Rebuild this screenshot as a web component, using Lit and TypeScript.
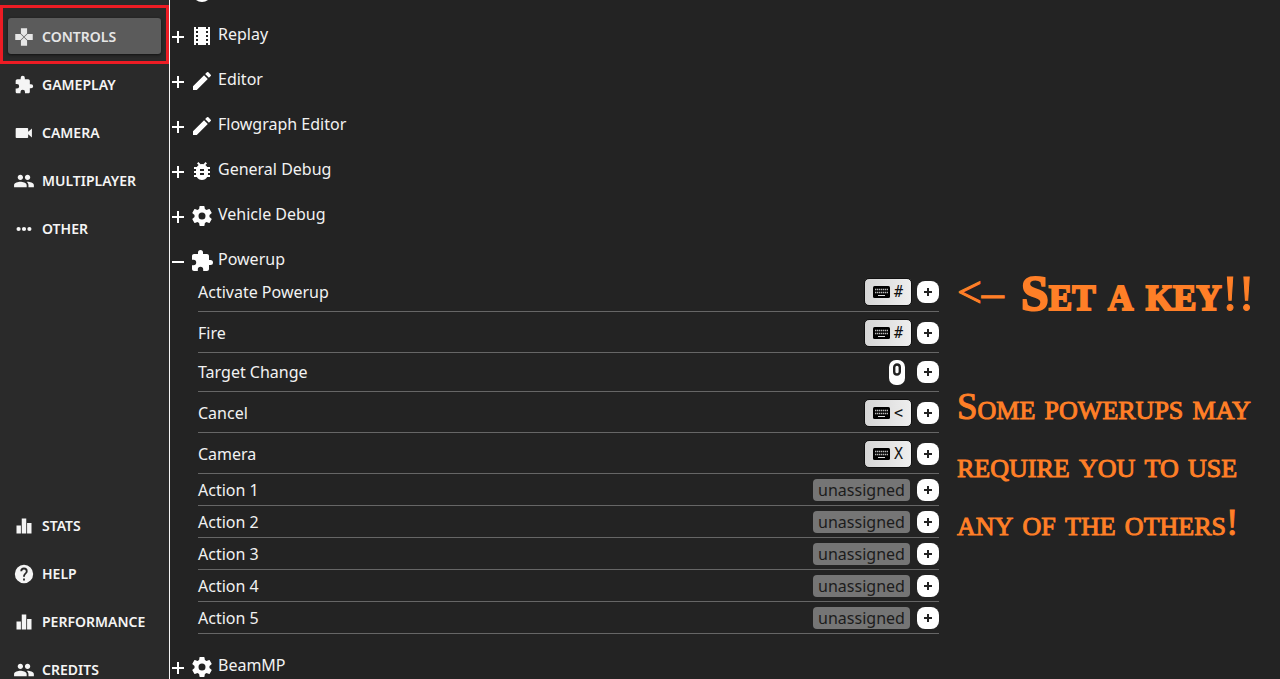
import { LitElement, html, css, svg, nothing } from "lit";
import { customElement, property } from "lit/decorators.js";

const icons: Record<string, unknown> = {
  dpad: svg`<path d="M8.300 1.500h7.400v6.300L12 11.500 8.300 7.800zM22.500 8.300v7.400h-6.300L12.500 12l3.700-3.700zM8.300 22.500h7.400v-6.300L12 12.500l-3.700 3.700zM1.500 8.300v7.400h6.300L11.500 12 7.800 8.300z"/>`,
  puzzle: svg`<path d="M20.500 11H19V7c0-1.100-.9-2-2-2h-4V3.500a2.500 2.500 0 0 0-5 0V5H4c-1.100 0-2 .9-2 2v3.800h1.500a2.700 2.700 0 0 1 0 5.400H2V20c0 1.100.9 2 2 2h3.800v-1.500a2.700 2.700 0 0 1 5.400 0V22H17c1.100 0 2-.9 2-2v-4h1.500a2.500 2.500 0 0 0 0-5z"/>`,
  video: svg`<path d="M17 10.500V7c0-.55-.45-1-1-1H3c-.55 0-1 .45-1 1v10c0 .55.45 1 1 1h13c.55 0 1-.45 1-1v-3.500l4.500 4v-11l-4.500 4z"/>`,
  people: svg`<path transform="translate(-1 -1) scale(1.080)" d="M16 11c1.660 0 2.990-1.340 2.990-3S17.660 5 16 5s-3 1.340-3 3 1.340 3 3 3zm-8 0c1.660 0 2.990-1.340 2.990-3S9.660 5 8 5 5 6.340 5 8s1.340 3 3 3zm0 2c-2.330 0-7 1.170-7 3.500V19h14v-2.500c0-2.330-4.670-3.500-7-3.500zm8 0c-.29 0-.62.02-.97.05 1.160.84 1.970 1.970 1.970 3.450V19h6v-2.500c0-2.330-4.670-3.500-7-3.500z"/>`,
  dots: svg`<circle cx="5.500" cy="12" r="2.500"/><circle cx="12" cy="12" r="2.500"/><circle cx="18.500" cy="12" r="2.500"/>`,
  bars: svg`<path d="M3 11.500h5.300V21H3zM9.300 3h5.400v18H9.300zM15.700 8.500H21V21h-5.300z"/>`,
  help: svg`<path fill-rule="evenodd" transform="translate(-1.200 -1.200) scale(1.100)" d="M12 2a10 10 0 1 0 0 20 10 10 0 0 0 0-20zm1 17h-2v-2h2zm2.070-7.750-.9.920C13.450 12.900 13 13.500 13 15h-2v-.5c0-1.100.45-2.100 1.170-2.830l1.240-1.260c.37-.36.59-.86.59-1.410a2 2 0 0 0-4 0H8a4 4 0 0 1 8 0c0 .88-.36 1.680-.93 2.250z"/>`,
  film: svg`<path d="M18 3v2h-2V3H8v2H6V3H4v18h2v-2h2v2h8v-2h2v2h2V3h-2zM8 17H6v-2h2v2zm0-4H6v-2h2v2zm0-4H6V7h2v2zm10 8h-2v-2h2v2zm0-4h-2v-2h2v2zm0-4h-2V7h2v2z"/>`,
  pencil: svg`<path d="M3 17.250V21h3.750L17.810 9.940l-3.750-3.750L3 17.250zM20.710 7.040a1 1 0 0 0 0-1.410l-2.340-2.340a1 1 0 0 0-1.410 0l-1.830 1.830 3.750 3.750 1.830-1.830z"/>`,
  bug: svg`<path d="M20 8h-2.810a5.985 5.985 0 0 0-1.820-1.960L17 4.410 15.590 3l-2.170 2.170a6.002 6.002 0 0 0-2.830 0L8.410 3 7 4.410l1.620 1.630C7.880 6.550 7.260 7.220 6.810 8H4v2h2.090c-.05.33-.09.66-.09 1v1H4v2h2v1c0 .34.04.67.09 1H4v2h2.810c1.040 1.790 2.970 3 5.190 3s4.150-1.210 5.190-3H20v-2h-2.090c.05-.33.09-.66.09-1v-1h2v-2h-2v-1c0-.34-.04-.67-.09-1H20V8zm-6 8h-4v-2h4v2zm0-4h-4v-2h4v2z"/>`,
  gear: svg`<path d="M19.430 12.980c.04-.32.07-.64.07-.98s-.03-.66-.07-.98l2.110-1.650c.19-.15.24-.42.12-.64l-2-3.460c-.12-.22-.39-.3-.61-.22l-2.490 1c-.52-.4-1.080-.73-1.690-.98l-.38-2.650A.488.488 0 0 0 14 2h-4c-.25 0-.46.18-.49.42l-.38 2.650c-.61.25-1.170.59-1.690.98l-2.490-1c-.23-.09-.49 0-.61.22l-2 3.460c-.13.22-.07.49.12.64l2.110 1.650c-.04.32-.07.65-.07.98s.03.66.07.98l-2.110 1.650c-.19.15-.24.42-.12.64l2 3.460c.12.22.39.3.61.22l2.490-1c.52.4 1.080.73 1.690.98l.38 2.650c.03.24.24.42.49.42h4c.25 0 .46-.18.49-.42l.38-2.650c.61-.25 1.170-.59 1.690-.98l2.490 1c.23.09.49 0 .61-.22l2-3.460c.12-.22.07-.49-.12-.64l-2.110-1.650zM12 15.500a3.500 3.500 0 1 1 0-7 3.500 3.500 0 0 1 0 7z"/>`,
  disc: svg`<circle cx="12" cy="13" r="10"/>`,
  plus: svg`<path d="M10 0h4v10h10v4H14v10h-4V14H0v-4h10z"/>`,
  boldPlus: svg`<path d="M9 0h6v9h9v6h-9v9H9v-9H0V9h9z"/>`,
  minus: svg`<path d="M0 10h24v4H0z"/>`,
};

const icon = (name: string) =>
  html`<svg class="icon" viewBox="0 0 24 24" aria-hidden="true">${icons[name]}</svg>`;

const keyboard = html`<svg class="keyboard" viewBox="0 0 17 12" aria-hidden="true">
  <rect width="17" height="12" rx="1.500" />
  <path d="M2 3.500h13M2 6.500h13" stroke="#bbb" stroke-width="1.400" stroke-dasharray="1.400 .6" />
  <path d="M5 9.500h7" stroke="#ddd" stroke-width="1" />
</svg>`;

interface Binding {
  label: string;
  kind: "key" | "mouse" | "none";
  value?: string;
}

interface Group {
  label: string;
  icon: string;
  open?: boolean;
  bindings?: Binding[];
}

const groups: Group[] = [
  { label: "", icon: "disc" },
  { label: "Replay", icon: "film" },
  { label: "Editor", icon: "pencil" },
  { label: "Flowgraph Editor", icon: "pencil" },
  { label: "General Debug", icon: "bug" },
  { label: "Vehicle Debug", icon: "gear" },
  {
    label: "Powerup",
    icon: "puzzle",
    open: true,
    bindings: [
      { label: "Activate Powerup", kind: "key", value: "#" },
      { label: "Fire", kind: "key", value: "#" },
      { label: "Target Change", kind: "mouse" },
      { label: "Cancel", kind: "key", value: "<" },
      { label: "Camera", kind: "key", value: "X" },
      { label: "Action 1", kind: "none" },
      { label: "Action 2", kind: "none" },
      { label: "Action 3", kind: "none" },
      { label: "Action 4", kind: "none" },
      { label: "Action 5", kind: "none" },
    ],
  },
  { label: "BeamMP", icon: "gear" },
];

@customElement("side-nav")
class SideNav extends LitElement {
  static styles = css`
    :host {
      display: flex;
      flex-direction: column;
      justify-content: space-between;
      box-sizing: border-box;
      padding: 18px 8px 0;
      background: #2a2a2a;
      border-right: 1px solid #f4f4f4;
      font: 600 14px/20px "Noto Sans", "Open Sans", sans-serif;
    }
    .group {
      display: flex;
      flex-direction: column;
      gap: 12px;
    }
    .secondary {
      margin-bottom: -8px;
    }
    .item {
      position: relative;
      display: flex;
      align-items: center;
      gap: 8px;
      box-sizing: border-box;
      height: 36px;
      padding: 2px 6px 0;
      border-radius: 3px;
      color: #f5f5f5;
      text-decoration: none;
    }
    .active {
      background: #5b5b5b;
      color: #e6e6e6;
      box-shadow: 0 1px 3px #111;
    }
    .active::after {
      content: "";
      position: absolute;
      inset: -13px -8px -10px;
      border: 3px solid #ed1c24;
    }
    .icon {
      flex: none;
      width: 20px;
      height: 20px;
      fill: currentColor;
    }
  `;

  private item(label: string, name: string, active = false) {
    return html`<a class="item ${active ? "active" : ""}" href="#${label.toLowerCase()}"
      aria-current=${active ? "page" : nothing}>${icon(name)}<span>${label}</span></a>`;
  }

  render() {
    return html`
      <nav class="group" aria-label="Options">
        ${this.item("CONTROLS", "dpad", true)} ${this.item("GAMEPLAY", "puzzle")}
        ${this.item("CAMERA", "video")} ${this.item("MULTIPLAYER", "people")}
        ${this.item("OTHER", "dots")}
      </nav>
      <nav class="group secondary" aria-label="Information">
        ${this.item("STATS", "bars")} ${this.item("HELP", "help")}
        ${this.item("PERFORMANCE", "bars")} ${this.item("CREDITS", "people")}
      </nav>
    `;
  }
}

@customElement("binding-row")
class BindingRow extends LitElement {
  @property({ attribute: false }) binding!: Binding;

  static styles = css`
    :host {
      display: block;
    }
    .row {
      display: flex;
      align-items: center;
      box-sizing: border-box;
      height: 32px;
      border-bottom: 1px solid #666;
    }
    .key-row {
      height: 41px;
      padding-top: 2px;
    }
    .mouse-row {
      height: 39px;
    }
    .label {
      flex: 1;
    }
    button {
      display: flex;
      align-items: center;
      justify-content: center;
      box-sizing: border-box;
      padding: 0;
      border: 0;
      color: #111;
    }
    .key {
      gap: 4px;
      width: 48px;
      height: 28px;
      margin-right: 5px;
      border: 1px solid #111;
      border-radius: 5px;
      background: linear-gradient(90deg, #d6d6d6, #eee);
      font: 15px/20px "DejaVu Sans Mono", monospace;
    }
    .keyboard {
      width: 17px;
      height: 12px;
    }
    .mouse {
      width: 16px;
      height: 25px;
      margin-right: 12px;
      background: none;
    }
    .mouse svg {
      width: 16px;
      height: 25px;
    }
    .none {
      width: 97px;
      height: 22px;
      margin-right: 7px;
      border-radius: 4px;
      background: #757575;
      color: #1c1c1c;
      font: 16px/20px "Noto Sans", "Open Sans", sans-serif;
    }
    .add {
      width: 22px;
      height: 22px;
      border-radius: 8px;
      background: #fff;
    }
    .icon {
      width: 8px;
      height: 8px;
      fill: #222;
    }
  `;

  private control(b: Binding) {
    if (b.kind === "key") return html`<button class="key">${keyboard}<span>${b.value}</span></button>`;
    if (b.kind === "none") return html`<button class="none">unassigned</button>`;
    return html`<button class="mouse" aria-label="Mouse wheel button">
      <svg viewBox="0 0 16 25" aria-hidden="true">
        <rect width="16" height="25" rx="7" fill="#fff" />
        <rect x="5.200" y="4.500" width="5.600" height="10" rx="2.800" fill="#fff" stroke="#222" stroke-width="2.400" />
      </svg>
    </button>`;
  }

  render() {
    const b = this.binding;
    return html`<div class="row ${b.kind}-row">
      <span class="label">${b.label}</span>
      ${this.control(b)}
      <button class="add" aria-label="Add binding for ${b.label}">${icon("boldPlus")}</button>
    </div>`;
  }
}

@customElement("binding-group")
class BindingGroup extends LitElement {
  @property({ attribute: false }) group!: Group;

  static styles = css`
    :host {
      display: block;
    }
    .head {
      display: flex;
      align-items: center;
      box-sizing: border-box;
      width: 100%;
      height: 45px;
      padding: 19px 0 2px 2px;
      border: 0;
      background: none;
      color: inherit;
      font: inherit;
      text-align: left;
    }
    .open {
      height: 43px;
      padding-bottom: 0;
    }
    .icon {
      width: 24px;
      height: 24px;
      margin: 4px 4px 0 0;
      fill: #fff;
    }
    .toggle {
      display: flex;
      padding-top: 6px;
    }
    .toggle .icon {
      width: 12px;
      height: 12px;
      margin: 0 6px 0 0;
    }
    .rows {
      margin-left: 28px;
    }
  `;

  render() {
    const g = this.group;
    return html`
      <button class="head ${g.open ? "open" : ""}" aria-expanded=${g.open ? "true" : "false"}>
        <span class="toggle">${icon(g.open ? "minus" : "plus")}</span>
        ${icon(g.icon)}<span>${g.label}</span>
      </button>
      ${g.bindings
        ? html`<div class="rows">
            ${g.bindings.map((b) => html`<binding-row .binding=${b}></binding-row>`)}
          </div>`
        : nothing}
    `;
  }
}

@customElement("app-root")
class AppRoot extends LitElement {
  static styles = css`
    :host {
      display: grid;
      grid-template-columns: 170px minmax(0, 1fr) 323px;
      height: 100vh;
      overflow: hidden;
      background: #232323;
      color: #f2f2f2;
      font: 16px/24px "Noto Sans", "Open Sans", sans-serif;
    }
    .bindings {
      margin-top: -42px;
      padding-right: 18px;
    }
    .notes {
      padding-top: 264px;
      color: #ff7f27;
      font-family: "Liberation Serif", serif;
      font-variant: small-caps;
      white-space: nowrap;
      -webkit-text-stroke: 1px #ff7f27;
    }
    .callout {
      display: flex;
      align-items: center;
      margin: 0;
      font-size: 50px;
      font-weight: 400;
      line-height: 58px;
    }
    .callout b {
      -webkit-text-stroke-width: 2px;
    }
    .arrow {
      flex: none;
      width: 64px;
      font-size: 44px;
    }
    .hint {
      margin: 56px 0 0;
      font-size: 37px;
      line-height: 58px;
    }
    .line {
      display: block;
    }
  `;

  render() {
    return html`
      <side-nav></side-nav>
      <main class="bindings">
        ${groups.map((g) => html`<binding-group .group=${g}></binding-group>`)}
      </main>
      <aside class="notes">
        <h2 class="callout"><span class="arrow">&lt;–</span><span><b>Set a key</b>!!</span></h2>
        <p class="hint">
          <span class="line">Some powerups may</span>
          <span class="line">require you to use</span>
          <span class="line">any of the others!</span>
        </p>
      </aside>
    `;
  }
}
